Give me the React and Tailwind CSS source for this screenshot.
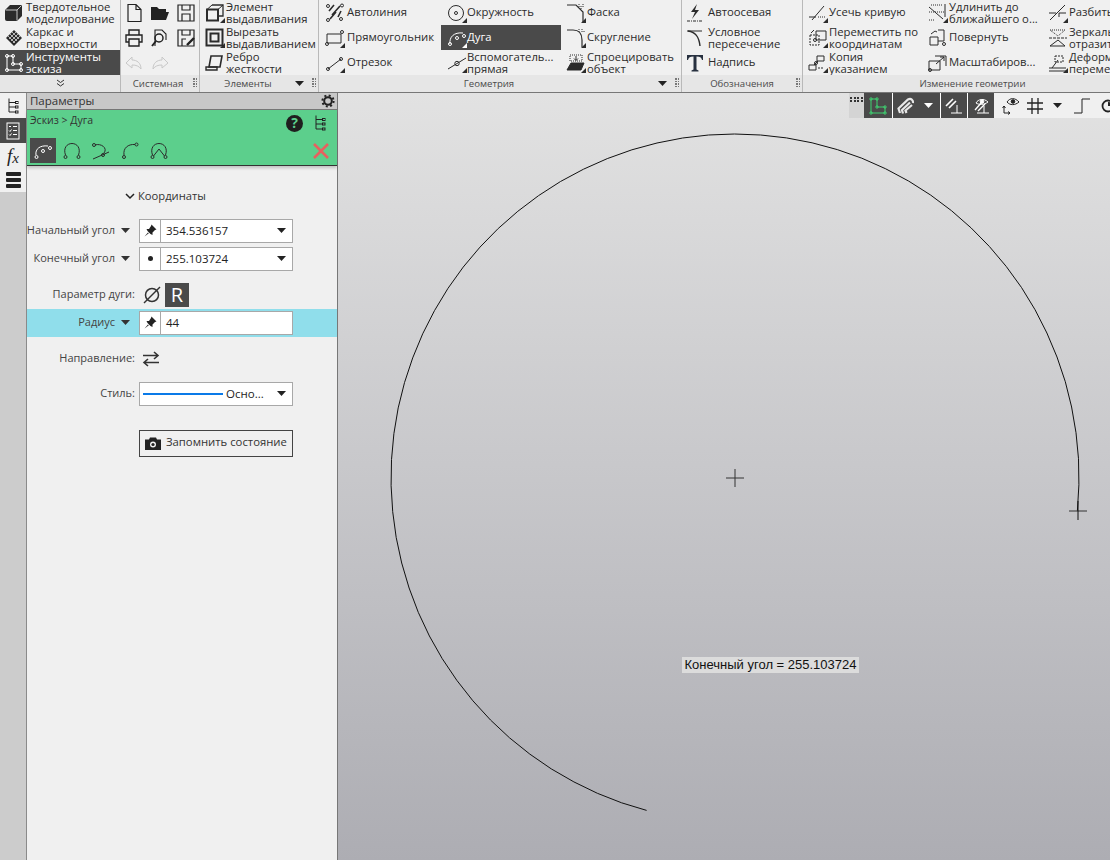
const Ico = ({ w = 20, tri, children, className = "" }) => (
    <svg width={w} height="20" viewBox={`0 0 ${w} 20`} fill="none" stroke="currentColor" strokeWidth="1" className={`shrink-0 ${className}`}>
        {children}
        {tri && <polygon points={`${w},15 ${w},20 ${w - 5},20`} fill="currentColor" stroke="none" />}
    </svg>
);

const Dot = ({ x, y, r = 1.5 }) => <circle cx={x} cy={y} r={r} />;

// ribbon icons
const icons = {
    solid: <g><path d="M2 7 L7 2 H19 V13 L14 18 H4 Q2 18 2 16Z" fill="currentColor" stroke="none" /><path d="M2.5 7H14V17.5M14 7L18.5 2.5" stroke="#f0f0f0" strokeWidth="0.8" /></g>,
    frame: <g fill="currentColor" stroke="none"><path d="M11 2 L19 10 L11 18 L3 10Z" /><path d="M8 3 L16 11 M6 5 L14 13 M4 7 L12 15 M14 3 L6 11 M16 5 L8 13 M18 7 L10 15" stroke="#f0f0f0" strokeWidth="0.7" /></g>,
    sketch: <g><path d="M4 3 H10 V11 H18 V17 H4Z" /><Dot x={4} y={3} /><Dot x={10} y={3} /><Dot x={10} y={11} /><Dot x={18} y={11} /><Dot x={18} y={17} /><Dot x={4} y={17} /></g>,
    extrude: <g strokeWidth="2"><path d="M7 2H18V13H14" strokeWidth="1.3" /><path d="M2 6.5H13V17.5H2Z" /><path d="M2 6.5L7 2M13 6.5L18 2" strokeWidth="1" /></g>,
    cut: <g strokeWidth="2"><rect x="1.5" y="1.5" width="16" height="16" /><rect x="5.5" y="5.5" width="8" height="8" /></g>,
    rib: <g><path d="M6 3H17L15 14H4Z" strokeWidth="1.6" /><path d="M1 14H12V17H1Z" strokeWidth="1.4" /></g>,
    autoline: <g><path d="M4 8L9 2M7 12L15 3M5 16L11 9M13 14L16 8" strokeWidth="1.6" /><Dot x={3} y={3} /><Dot x={17} y={2.5} /><Dot x={3} y={17} /><Dot x={16} y={16} /></g>,
    rect: <g><path d="M2 6H16V15H2Z" /><Dot x={17} y={4} /><Dot x={2} y={16} /></g>,
    segment: <g><path d="M3 16L16 6" /><Dot x={3} y={16} /><Dot x={16} y={6} /></g>,
    circle: <g><circle cx="9" cy="10" r="7.5" /><Dot x={9} y={10} /></g>,
    arc: <g><path d="M3 16C2 9 7 4 16 5" /><Dot x={3} y={16} /><Dot x={10} y={10} /><Dot x={17} y={8} /></g>,
    aux: <g><path d="M1 16L19 5" /><circle cx="10" cy="10.5" r="2.2" /></g>,
    chamfer: <g><path d="M1 2H10L17 9V19" strokeWidth="1.2" /><path d="M13 1V5M15 3V6M17 1V5" strokeDasharray="1 1" /></g>,
    fillet: <g><path d="M1 2H7C13 2 16 6 16 12V19" strokeWidth="1.2" /><path d="M13 1V4M16 1V4M18 3V5" strokeDasharray="1 1" /></g>,
    project: <g><path d="M4 2H16V8H4Z" strokeDasharray="1 1" /><path d="M10 3V7M8 5.5L10 7.5L12 5.5" /><path d="M1 17L5 10H18L15 17Z" fill="currentColor" /></g>,
    axial: <g><path d="M11 1L5 9H9L6 16L13 7H9Z" fill="currentColor" stroke="none" /><path d="M1 18H16" strokeDasharray="3 1 1 1" /></g>,
    cross: <g><path d="M1 3H16" /><path d="M2 3C10 4 13 9 14 18" strokeWidth="1.4" /></g>,
    text: <path d="M1 2H17V7H16C15.5 4.5 14 3.5 10.5 3.5V16.5L12.5 17.5V18.5H5.5V17.5L7.5 16.5V3.5C4 3.5 2.5 4.5 2 7H1Z" fill="#27303f" stroke="none" />,
    trim: <g><path d="M1 14H8" /><path d="M10 14H17" strokeDasharray="1 1" /><path d="M4 17L16 3" /></g>,
    moveTo: <g><path d="M8 3H18V12H8Z" /><path d="M2 7H11V17H2Z" strokeDasharray="2 1" /><Dot x={7} y={12} /><path d="M3 5L6 2" /></g>,
    copy: <g><path d="M9 3H16V8H9Z" /><path d="M1 12H8V17H1Z" /><path d="M6 12L10 8" /><Dot x={8} y={10} /><path d="M10 15H16" strokeDasharray="2 1" /></g>,
    extend: <g><path d="M17 1V14" /><path d="M1 4L15 16" /><path d="M1 9H16" strokeDasharray="1 1" /><path d="M1 17H6" strokeDasharray="1 1" /><path d="M3 2H14" strokeDasharray="1 1" /></g>,
    rotate: <g><path d="M2 9H10V17H2Z" /><path d="M10 2H16V13H10" /><path d="M3 6L7 3L9 4" /><Dot x={16} y={16} /></g>,
    scale: <g><path d="M1 8H12V17H1Z" /><path d="M7 3H18V13" /><path d="M8 11L16 4M12 4H16V8" /><Dot x={2} y={17} /></g>,
    split: <g><path d="M2 17L17 2" /><path d="M1 10H8M11 10H18M11 10V14" /></g>,
    mirror: <g><path d="M2 2H17L10 8Z" strokeDasharray="1 1" /><path d="M1 10H19" strokeDasharray="3 1" /><path d="M10 12L17 18H2Z" /></g>,
    deform: <g><path d="M7 3H15V9H7Z" strokeDasharray="2 1" /><path d="M1 15H18" /><path d="M1 18H18" /><path d="M4 15L10 7" /></g>,
};

const Item = ({ icon, tri, lines, active, className = "", gap = "gap-[3px]" }) => (
    <div className={`flex h-[25px] items-center ${gap} ${active ? "bg-[#4a4a4a] text-white" : "text-[#2b2b2b]"} ${className}`}>
        <Ico tri={tri}>{icons[icon]}</Ico>
        <div className={`text-[11.3px] leading-[12px] whitespace-nowrap ${lines.length === 1 ? "pb-[2px]" : ""}`}>
            {lines.map((l) => (
                <div key={l}>{l}</div>
            ))}
        </div>
    </div>
);

const Grip = () => (
    <div className="grid grid-cols-2 gap-[1px]">
        {[0, 1, 2, 3, 4, 5, 6, 7].map((i) => (
            <div key={i} className="h-[1.5px] w-[1.5px] bg-[#777]" />
        ))}
    </div>
);

const Arrow = ({ className = "" }) => (
    <svg width="9" height="5" viewBox="0 0 9 5" className={`shrink-0 ${className}`}>
        <polygon points="0,0 9,0 4.5,5" fill="currentColor" />
    </svg>
);

const Group = ({ width, label, arrow, grip = true, children }) => (
    <div className={`flex flex-col shrink-0 border-r border-[#b9b9b9] ${width}`}>
        <div className="flex h-[75px]">{children}</div>
        <div className="relative flex h-[17px] items-center justify-center bg-[#e6e6e6] pt-[2px] text-[9.6px] text-[#4a4a4a]">
            <span>{label}</span>
            {arrow && <Arrow className="absolute right-[14px] top-[6px] text-[#222]" />}
            {grip && (
                <div className="absolute right-[2px] top-[3px]">
                    <Grip />
                </div>
            )}
        </div>
    </div>
);

const Ribbon = () => (
    <div className="flex h-[93px] shrink-0 border-b border-[#777] bg-[#f0f0f0]">
        <Group width="w-[121px]" label={<svg width="9" height="8" viewBox="0 0 9 8" fill="none" stroke="#333" className="mb-[3px]"><path d="M1 1L4.5 3.5L8 1M1 4.5L4.5 7L8 4.5" /></svg>} grip={false}>
            <div className="w-full">
                <Item icon="solid" lines={["Твердотельное", "моделирование"]} className="pl-[3px]" />
                <Item icon="frame" lines={["Каркас и", "поверхности"]} className="pl-[3px]" />
                <Item icon="sketch" lines={["Инструменты", "эскиза"]} active className="pl-[3px]" />
            </div>
        </Group>
        <Group width="w-[79px]" label={<span className="mr-[4px]">Системная</span>}>
            <div className="grid w-[78px] grid-cols-3 grid-rows-3 place-items-center text-[#222]">
                <Ico><path d="M4 1.5H12L17 6.5V18.5H4Z M12 1.5V6.5H17" strokeWidth="1.2" /></Ico>
                <Ico><path d="M1 4H7L9 6H16V9H5L2 17H1Z M5 9H19L16 17H2Z" fill="currentColor" stroke="none" /></Ico>
                <Ico><path d="M2 2H18V18H2Z M6 2V7H14V2 M6 18V11H14V18" strokeWidth="1.2" /></Ico>
                <Ico><path d="M5 7V2H15V7 M5 14H2V7H18V14H15 M5 11H15V18H5Z" strokeWidth="1.4" /></Ico>
                <Ico><path d="M5 18V2H12L16 6V12" strokeWidth="1.1" /><circle cx="9" cy="10" r="4" strokeWidth="1.5" /><path d="M6 13L2 18" strokeWidth="2" /></Ico>
                <Ico><path d="M2 2H18V18H2Z M6 2V7H14V2 M6 18V11H10" strokeWidth="1.2" /><path d="M11 17L18 10" strokeWidth="2.4" /></Ico>
                <Ico className="text-[#c8c8c8]"><path d="M8 4L2 10L8 15V12C12 12 15 13 17 16C17 10 13 7 8 7Z" /></Ico>
                <Ico className="text-[#c8c8c8]"><path d="M12 4L18 10L12 15V12C8 12 5 13 3 16C3 10 7 7 12 7Z" /></Ico>
                <div />
            </div>
        </Group>
        <Group width="w-[119px]" label={<span className="mr-[22px]">Элементы</span>} arrow>
            <div className="w-full">
                <Item icon="extrude" tri lines={["Элемент", "выдавливания"]} className="pl-[5px]" gap="gap-[1px]" />
                <Item icon="cut" tri lines={["Вырезать", "выдавливанием"]} className="pl-[5px]" gap="gap-[1px]" />
                <Item icon="rib" lines={["Ребро", "жесткости"]} className="pl-[5px]" gap="gap-[1px]" />
            </div>
        </Group>
        <Group width="w-[363px]" label={<span className="mr-[22px]">Геометрия</span>} arrow>
            <div className="w-[122px] pl-[6px]">
                <Item icon="autoline" lines={["Автолиния"]} gap="gap-[2px]" />
                <Item icon="rect" tri lines={["Прямоугольник"]} gap="gap-[2px]" />
                <Item icon="segment" tri lines={["Отрезок"]} gap="gap-[2px]" />
            </div>
            <div className="w-[120px]">
                <Item icon="circle" tri lines={["Окружность"]} className="pl-[6px]" gap="gap-0" />
                <Item icon="arc" tri active lines={["Дуга"]} className="pl-[6px]" gap="gap-0" />
                <Item icon="aux" tri lines={["Вспомогатель...", "прямая"]} className="pl-[6px]" gap="gap-0" />
            </div>
            <div className="pl-[5px]">
                <Item icon="chamfer" tri lines={["Фаска"]} gap="gap-[1px]" />
                <Item icon="fillet" tri lines={["Скругление"]} gap="gap-[1px]" />
                <Item icon="project" tri lines={["Спроецировать", "объект"]} gap="gap-[1px]" />
            </div>
        </Group>
        <Group width="w-[121px]" label="Обозначения">
            <div className="w-full pl-[4px]">
                <Item icon="axial" lines={["Автоосевая"]} gap="gap-[2px]" />
                <Item icon="cross" lines={["Условное", "пересечение"]} gap="gap-[2px]" />
                <Item icon="text" lines={["Надпись"]} gap="gap-[2px]" />
            </div>
        </Group>
        <div className="flex min-w-0 flex-1 flex-col overflow-hidden">
            <div className="flex h-[75px]">
                <div className="w-[122px] shrink-0 pl-[5px]">
                    <Item icon="trim" tri lines={["Усечь кривую"]} gap="gap-[1px]" />
                    <Item icon="moveTo" tri lines={["Переместить по", "координатам"]} gap="gap-[1px]" />
                    <Item icon="copy" tri lines={["Копия", "указанием"]} gap="gap-[1px]" />
                </div>
                <div className="w-[120px] shrink-0 pl-[3px]">
                    <Item icon="extend" tri lines={["Удлинить до", "ближайшего о..."]} gap="gap-[1px]" />
                    <Item icon="rotate" lines={["Повернуть"]} gap="gap-[1px]" />
                    <Item icon="scale" lines={["Масштабиров..."]} gap="gap-[1px]" />
                </div>
                <div className="shrink-0 pl-[3px]">
                    <Item icon="split" tri lines={["Разбить"]} gap="gap-[1px]" />
                    <Item icon="mirror" lines={["Зеркально", "отразить"]} gap="gap-[1px]" />
                    <Item icon="deform" tri lines={["Деформация", "перемещением"]} gap="gap-[1px]" />
                </div>
            </div>
            <div className="flex h-[17px] items-center justify-center bg-[#e6e6e6] pl-[32px] pt-[2px] text-[9.6px] text-[#4a4a4a]">Изменение геометрии</div>
        </div>
    </div>
);

const Tree = ({ className = "" }) => (
    <svg width="12" height="16" viewBox="0 0 12 16" fill="none" stroke="currentColor" className={className}>
        <path d="M2 0.5V14H8M2 4.5H8M2 9H8" />
        <rect x="8.5" y="3.5" width="2.5" height="2" />
        <rect x="8.5" y="8" width="2.5" height="2" />
        <rect x="8.5" y="13" width="2.5" height="2" />
    </svg>
);

const SideStrip = () => (
    <div className="flex w-[27px] shrink-0 flex-col border-r border-[#8a8a8a] bg-[#cccccc]">
        <div className="flex h-[25px] items-center justify-center bg-[#f0f0f0] text-[#222]">
            <Tree />
        </div>
        <div className="flex h-[25px] items-center justify-center bg-[#4a4a4a] text-white">
            <svg width="14" height="18" viewBox="0 0 14 18" fill="none" stroke="currentColor">
                <rect x="1" y="1" width="12" height="16" />
                <path d="M3 4.5H5M7 4.5H11M3 8.5L4 9.5L5.5 7.5M7 8.5H11M3 12.5L4 13.5L5.5 11.5M7 12.5H11" />
            </svg>
        </div>
        <div className="flex h-[25px] items-center justify-center bg-[#f0f0f0] font-['Liberation_Serif',serif] text-[19px] italic leading-none text-[#222]">
            f<span className="mt-[6px] text-[15px]">x</span>
        </div>
        <div className="flex h-[24px] flex-col items-center justify-center gap-[2px] bg-[#f0f0f0]">
            <div className="h-[4px] w-[15px] rounded-[1px] bg-[#222]" />
            <div className="h-[4px] w-[15px] rounded-[1px] bg-[#222]" />
            <div className="h-[4px] w-[15px] rounded-[1px] bg-[#222]" />
        </div>
    </div>
);

const Pin = () => (
    <svg width="13" height="13" viewBox="0 0 13 13" fill="#222">
        <path d="M7.5 0.5L12.5 5.5L11 6L8.5 8.5L8.5 11L6.5 10L3.5 7L2.5 5L5 5L7 2Z" />
        <path d="M4 8.5L0.5 12.5L4.8 9.3Z" />
    </svg>
);

const ModeIcon = ({ active, children }) => (
    <div className={`flex h-[25px] w-[26px] items-center justify-center ${active ? "bg-[#4a4a4a] text-white" : "text-[#2b2b2b]"}`}>
        <svg width="20" height="20" viewBox="0 0 20 20" fill="none" stroke="currentColor">
            {children}
        </svg>
    </div>
);

const Field = ({ icon, value, arrow }) => (
    <div className="flex h-[24px] w-[154px] items-center border border-[#a8a8a8] bg-white text-[11.5px] text-[#222]">
        <div className="flex h-full w-[21px] shrink-0 items-center justify-center border-r border-[#a8a8a8]">{icon}</div>
        <div className="flex-1 pb-[1px] pl-[5px]">{value}</div>
        {arrow && <Arrow className="mr-[6px] text-[#222]" />}
    </div>
);

const Label = ({ children, arrow }) => (
    <div className={`flex w-[112px] shrink-0 items-center justify-end gap-[6px] whitespace-nowrap text-[11px] text-[#444] ${arrow ? "pr-[9px]" : "pr-[4px]"}`}>
        <span className="pb-[2px]">{children}</span>
        {arrow && <Arrow className="text-[#333]" />}
    </div>
);

const ParamsPanel = () => (
    <div className="flex w-[311px] shrink-0 flex-col border-r border-[#777] bg-[#f0f0f0]">
        <div className="flex h-[17px] shrink-0 items-center justify-between border-b border-[#777] bg-[#c8c8c8] pl-[3px] pr-[2px] text-[11.5px] text-[#333]">
            <span>Параметры</span>
            <svg width="14" height="14" viewBox="0 0 14 14" fill="none" stroke="#222">
                <circle cx="7" cy="7" r="3.8" strokeWidth="2" />
                <circle cx="7" cy="7" r="5.6" strokeWidth="2" strokeDasharray="2 2.4" />
            </svg>
        </div>
        <div className="h-[56px] shrink-0 border-b border-[#333] bg-[#5ccf8c] shadow-[0_2px_3px_rgba(0,0,0,0.2)]">
            <div className="flex h-[26px] items-center pl-[3px] pr-[11px] text-[10.5px] text-[#333]">
                <span className="flex-1 pb-[4px]">Эскиз &gt; Дуга</span>
                <div className="mr-[11px] flex h-[17px] w-[17px] items-center justify-center rounded-full bg-[#1f1f1f] text-[14px] font-bold leading-none text-[#5ccf8c]">?</div>
                <Tree className="text-[#222]" />
            </div>
            <div className="flex items-center pl-[3px] pr-[8px] pt-[2px]">
                <div className="flex gap-[3px]">
                    <ModeIcon active>
                        <path d="M3 14C2 8 7 4 15 5" />
                        <Dot x={3.5} y={16} /><Dot x={10} y={10} /><Dot x={17} y={7} />
                    </ModeIcon>
                    <ModeIcon>
                        <path d="M3.5 14C1 7 5 2.5 10 2.5S19 7 16.5 14" />
                        <Dot x={3.5} y={16} /><Dot x={16.5} y={16} />
                    </ModeIcon>
                    <ModeIcon>
                        <path d="M4 4C10 2 17 7 13 12M2 18L18 11" />
                        <Dot x={3} y={4} /><Dot x={12} y={14} />
                    </ModeIcon>
                    <ModeIcon>
                        <path d="M4 14C3 7 8 3 15 3.5" />
                        <Dot x={4} y={16} /><Dot x={16.5} y={3.5} />
                    </ModeIcon>
                    <ModeIcon>
                        <path d="M3.5 14C1 7 5 2.5 10 2.5S19 7 16.5 14M4.5 15L10 8L15.5 15" />
                        <Dot x={3.5} y={16} /><Dot x={16.5} y={16} />
                    </ModeIcon>
                </div>
                <svg width="16" height="16" viewBox="0 0 16 16" stroke="#e8605f" strokeWidth="2.6" className="ml-auto">
                    <path d="M1 1L15 15M15 1L1 15" />
                </svg>
            </div>
        </div>
        <div className="flex items-center gap-[3px] pl-[98px] pt-[22px] text-[11.2px] font-medium text-[#333]">
            <svg width="10" height="7" viewBox="0 0 10 7" fill="none" stroke="#222" strokeWidth="1.5"><path d="M1 1L5 5L9 1" /></svg>
            <span>Координаты</span>
        </div>
        <div className="mt-[14px] flex flex-col gap-[4px]">
            <div className="flex">
                <Label arrow>Начальный угол</Label>
                <Field icon={<Pin />} value="354.536157" arrow />
            </div>
            <div className="flex">
                <Label arrow>Конечный угол</Label>
                <Field icon={<div className="h-[5px] w-[5px] rounded-full bg-[#222]" />} value="255.103724" arrow />
            </div>
        </div>
        <div className="mt-[12px] flex h-[24px] items-center">
            <Label>Параметр дуги:</Label>
            <svg width="20" height="20" viewBox="0 0 20 20" fill="none" stroke="#333" strokeWidth="1.5" className="ml-[3px]">
                <circle cx="10" cy="10" r="6.5" />
                <path d="M2 18L18 2" />
            </svg>
            <div className="ml-[3px] flex h-[24px] w-[24px] items-center justify-center bg-[#4a4a4a] text-[20px] leading-none text-white">R</div>
        </div>
        <div className="mt-[2px] flex h-[28px] items-center bg-[#90deeb]">
            <Label arrow>Радиус</Label>
            <Field icon={<Pin />} value="44" />
        </div>
        <div className="mt-[12px] flex h-[20px] items-center">
            <Label>Направление:</Label>
            <svg width="18" height="16" viewBox="0 0 18 16" fill="none" stroke="#333" strokeWidth="1.6" className="ml-[3px]">
                <path d="M1 4.5H16M12 1L16 4.5L12 8M17 11.5H2M6 8L2 11.5L6 15" />
            </svg>
        </div>
        <div className="mt-[13px] flex items-center">
            <Label>Стиль:</Label>
            <div className="flex h-[24px] w-[154px] items-center border border-[#a8a8a8] bg-white pl-[3px] pr-[6px] text-[11.5px] text-[#222]">
                <div className="h-[2px] w-[80px] shrink-0 bg-[#0a7ae8]" />
                <span className="ml-[3px] flex-1 pb-[1px]">Осно...</span>
                <Arrow />
            </div>
        </div>
        <div className="ml-[112px] mt-[24px] flex h-[27px] w-[154px] items-center gap-[5px] border border-[#444] pl-[5px] text-[11.3px] text-[#333]">
            <svg width="16" height="13" viewBox="0 0 16 13">
                <path d="M0 2.5H4L5 0.5H11L12 2.5H16V13H0Z" fill="#222" />
                <circle cx="8" cy="7.5" r="3" fill="#f0f0f0" />
                <circle cx="8" cy="7.5" r="1.6" fill="#222" />
            </svg>
            <span className="pb-[1px]">Запомнить состояние</span>
        </div>
    </div>
);

const Sep = () => <div className="w-[1px] self-stretch bg-white" />;

const ViewBar = () => (
    <div className="absolute right-0 top-0 flex h-[25px] w-[261px] overflow-hidden bg-[#f0f0f0]">
        <div className="grid w-[15px] shrink-0 grid-cols-4 content-start gap-[1px] bg-[#d4d4d4] px-[1px] pt-[4px]">
            {[0, 1, 2, 3, 4, 5, 6, 7].map((i) => (
                <div key={i} className="h-[2px] w-[2px] bg-[#333]" />
            ))}
        </div>
        <div className="flex shrink-0 items-center bg-[#4a4a4a] text-white">
            <div className="flex w-[28px] items-center justify-center text-[#3fd070]">
                <svg width="18" height="18" viewBox="0 0 18 18" fill="none" stroke="currentColor">
                    <path d="M2 2H8V10H16V16H2Z" />
                    <Dot x={2} y={2} r={1.2} /><Dot x={8} y={2} r={1.2} /><Dot x={8} y={10} r={1.2} /><Dot x={16} y={10} r={1.2} /><Dot x={16} y={16} r={1.2} /><Dot x={2} y={16} r={1.2} />
                </svg>
            </div>
            <Sep />
            <div className="flex w-[47px] items-center gap-[9px] pl-[4px]">
                <svg width="18" height="18" viewBox="0 0 18 18" fill="none" stroke="#e8e8e8" strokeWidth="2.2">
                    <path d="M3 16L1.5 11.5L11 2.5C14 1 16.5 3 16 6" />
                    <path d="M6 16.5L5 13L13 5.5" />
                    <path d="M9.5 16L8.5 13.5L15 8" />
                </svg>
                <Arrow className="text-white" />
            </div>
            <Sep />
            <div className="flex w-[26px] items-center justify-center">
                <svg width="18" height="18" viewBox="0 0 18 18" fill="none" stroke="currentColor">
                    <path d="M1 9L8 2M4 11L11 4" strokeWidth="1.6" />
                    <path d="M12 8V16M6 16H17" />
                </svg>
            </div>
            <Sep />
            <div className="flex w-[26px] items-center justify-center">
                <svg width="18" height="18" viewBox="0 0 18 18" fill="none" stroke="currentColor">
                    <path d="M3 13L10 5M6 14L13 7" strokeWidth="1.4" />
                    <path d="M4 6C6 2 12 1 16 5C12 8 7 8 4 6Z" />
                    <circle cx="10" cy="4.6" r="1.8" fill="currentColor" />
                    <path d="M12 9V16M5 16H17" />
                </svg>
            </div>
        </div>
        <div className="flex flex-1 items-center text-[#222]">
            <svg width="20" height="18" viewBox="0 0 20 18" fill="none" stroke="currentColor" className="ml-[7px]">
                <path d="M6 5C9 0.5 14 0.5 18 5C14 8.5 9 8.5 6 5Z" />
                <circle cx="12" cy="4.5" r="1.8" fill="currentColor" />
                <path d="M3 9V16H9M1.5 11L3 9L4.5 11M7 14.5L9 16L7 17.5" />
            </svg>
            <svg width="16" height="16" viewBox="0 0 16 16" fill="none" stroke="currentColor" strokeWidth="1.3" className="ml-[6px]">
                <path d="M5 0V16M11 0V16M0 5H16M0 11H16" />
            </svg>
            <Arrow className="ml-[10px]" />
            <svg width="16" height="16" viewBox="0 0 16 16" fill="none" stroke="currentColor" className="ml-[12px]">
                <path d="M0 15H8V1H16" />
            </svg>
            <svg width="14" height="14" viewBox="0 0 14 14" className="ml-[11px] shrink-0">
                <circle cx="7" cy="7" r="5.5" fill="#f0f0f0" stroke="#222" strokeWidth="1.8" />
                <path d="M7 7V3A4 4 0 0 1 11 7Z" fill="#222" />
            </svg>
        </div>
    </div>
);

// arc from 354.536157 round to 255.103724, faceted like the CAD preview
const arcPoints = () => {
    const pts = [];
    const cx = 397;
    const cy = 385;
    const r = 344;
    const total = 360 - 354.536157 + 255.103724;
    const steps = 60;
    for (let i = 0; i <= steps; i++) {
        const a = ((354.536157 + (total * i) / steps) * Math.PI) / 180;
        pts.push(`${(cx + r * Math.cos(a)).toFixed(1)},${(cy - r * Math.sin(a)).toFixed(1)}`);
    }
    return pts.join(" ");
};

const Canvas = () => (
    <div className="relative min-w-0 flex-1 overflow-hidden bg-linear-to-b from-[#e2e2e2] to-[#adadb3]">
        <svg width="772" height="767" viewBox="0 0 772 767" fill="none" className="absolute left-0 top-0">
            <polyline points={arcPoints()} stroke="#111" />
            <path d="M388 385H406M397 376V394" stroke="#333" />
            <path d="M731 418H749" stroke="#333" />
            <path d="M740 408V427" stroke="#111" />
        </svg>
        <ViewBar />
        <div className="absolute left-[344px] top-[564px] flex h-[16px] w-[177px] items-center justify-center bg-[#dcdcdc] font-['Liberation_Sans',sans-serif] text-[13px] text-[#111]">
            Конечный угол = 255.103724
        </div>
    </div>
);

const App = () => {
    return (
        <div className="flex h-[860px] w-[1110px] flex-col overflow-hidden bg-[#f0f0f0] font-['Open_Sans',sans-serif]">
            <Ribbon />
            <div className="flex min-h-0 flex-1">
                <SideStrip />
                <ParamsPanel />
                <Canvas />
            </div>
        </div>
    );
};

export default App;
